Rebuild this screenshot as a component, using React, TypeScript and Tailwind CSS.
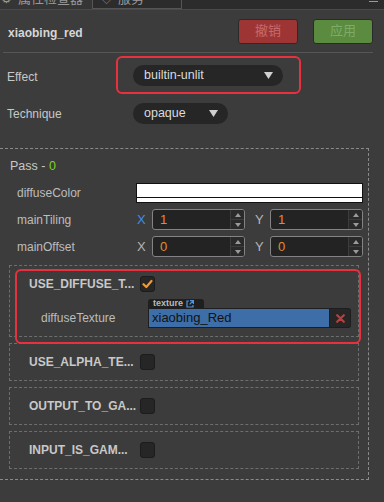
import { useState } from "react";

const Caret = () => (
	<svg width="9" height="7" viewBox="0 0 9 7">
		<path d="M0 0h9L4.5 7z" fill="#d0d0d0" />
	</svg>
);

const Spinner = () => (
	<div className="flex h-full w-[14px] flex-col border-l border-[#3c3c3c] bg-[#2a2a2a]">
		<div className="flex flex-1 items-center justify-center border-b border-[#3c3c3c]">
			<svg width="6" height="4" viewBox="0 0 6 4">
				<path d="M0 4h6L3 0z" fill="#9a9a9a" />
			</svg>
		</div>
		<div className="flex flex-1 items-center justify-center">
			<svg width="6" height="4" viewBox="0 0 6 4">
				<path d="M0 0h6L3 4z" fill="#9a9a9a" />
			</svg>
		</div>
	</div>
);

const NumField = ({ value }: { value: string }) => (
	<div className="flex h-[21px] w-[93px] items-center overflow-hidden rounded-[3px] border border-[#838383] bg-[#232323]">
		<span className="flex-1 pl-[7px] text-[13px] text-[#e38b2c]">{value}</span>
		<Spinner />
	</div>
);

const Checkbox = ({ checked }: { checked: boolean }) => (
	<div className="flex h-[16px] w-[15px] items-center justify-center rounded-[3px] border border-[#1c1c1c] bg-[#262626]">
		{checked && (
			<svg width="11" height="10" viewBox="0 0 11 10">
				<path d="M1.5 5.2l2.8 2.8L9.5 2" fill="none" stroke="#f29a2e" strokeWidth="2.2" strokeLinecap="round" strokeLinejoin="round" />
			</svg>
		)}
	</div>
);

const DefineBox = ({ name }: { name: string }) => (
	<div className="flex h-[38px] w-[350px] items-center border border-dashed border-[#6e6e6e] pl-[19px]">
		<span className="w-[111px] text-[12px] font-bold text-[#c8c8c8]">{name}</span>
		<Checkbox checked={false} />
	</div>
);

const VecRow = ({ label, x, y, blueX }: { label: string; x: string; y: string; blueX?: boolean }) => (
	<div className="flex h-[21px] items-center">
		<span className="w-[137px] pl-[17px] text-[12px] text-[#bdbdbd]">{label}</span>
		<span className={`w-[15px] text-[13px] ${blueX ? "text-[#3d8ee8]" : "text-[#b5b5b5]"}`}>X</span>
		<NumField value={x} />
		<span className="ml-[10px] w-[15px] text-[13px] text-[#b5b5b5]">Y</span>
		<NumField value={y} />
	</div>
);

export default function App() {
	const [useDiffuse] = useState(true);

	return (
		<div className="h-[502px] w-[384px] overflow-hidden bg-[#3c3c3c] font-['Liberation_Sans','Noto_Sans_CJK_SC',sans-serif]">
			{/* tab strip, scrolled off the top */}
			<div className="flex h-[10px] items-end overflow-hidden border-b border-[#4a4a4a] bg-[#2c2c2c]">
				<div className="flex h-[20px] w-[92px] shrink-0 items-center gap-[6px] bg-[#353535] pl-[1px] text-[13px] text-[#9a9a9a]">
					<span className="text-[12px]">⚙</span>
					<span>属性检查器</span>
				</div>
				<div className="flex h-[20px] w-[90px] shrink-0 items-center gap-[6px] border border-[#555] pl-[8px] text-[13px] text-[#9a9a9a]">
					<span className="text-[11px]">◇</span>
					<span>服务</span>
				</div>
				<div className="ml-auto mr-[6px] mb-[7px] h-[1px] w-[9px] bg-[#9a9a9a]" />
			</div>

			{/* header */}
			<div className="flex h-[42px] items-center justify-between pl-[8px] pr-[11px]">
				<span className="pt-[3px] text-[12px] font-bold text-[#d6d6d6]">xiaobing_red</span>
				<div className="flex gap-[15px]">
					<button className="h-[25px] w-[60px] rounded-[3px] border border-[#2a2a2a] bg-[#9e3535] text-[13px] text-[#c66a6a]">
						撤销
					</button>
					<button className="h-[25px] w-[60px] rounded-[3px] border border-[#2a2a2a] bg-[#5a8b3e] text-[13px] text-[#7eab68]">
						应用
					</button>
				</div>
			</div>
			<div className="ml-[3px] h-[1px] w-[370px] bg-[#565656]" />

			{/* Effect */}
			<div className="mt-[3px] flex items-center">
				<span className="w-[116px] pl-[7px] pt-[3px] text-[12px] text-[#c8c8c8]">Effect</span>
				<div className="flex h-[38px] w-[185px] items-center rounded-[6px] border-2 border-[#e8303f] pl-[15px]">
					<div className="flex h-[21px] w-[150px] items-center justify-between rounded-full bg-[#262626] pl-[11px] pr-[10px]">
						<span className="text-[12.5px] text-[#dcdcdc]">builtin-unlit</span>
						<Caret />
					</div>
				</div>
			</div>

			{/* Technique */}
			<div className="mt-[9px] flex items-center">
				<span className="w-[133px] pl-[7px] text-[12px] text-[#c8c8c8]">Technique</span>
				<div className="flex h-[21px] w-[95px] items-center justify-between rounded-full bg-[#262626] pl-[11px] pr-[10px]">
					<span className="text-[12.5px] text-[#dcdcdc]">opaque</span>
					<Caret />
				</div>
			</div>

			{/* Pass */}
			<div className="mt-[24px] w-[369px] border border-l-0 border-dashed border-[#8a8a8a] pb-[10px] pt-[7px]">
				<div className="flex h-[20px] items-center pl-[10px] text-[12.5px] text-[#c8c8c8]">
					Pass -&nbsp;<span className="text-[#7ed321]">0</span>
				</div>

				<div className="mt-[7px] flex h-[20px] items-center">
					<span className="w-[136px] pl-[17px] text-[12px] text-[#bdbdbd]">diffuseColor</span>
					<div className="flex h-[20px] w-[227px] flex-col border border-[#111] bg-white">
						<div className="flex-1" />
						<div className="h-[1px] bg-[#111]" />
						<div className="h-[4px]" />
					</div>
				</div>

				<div className="mt-[6px] flex flex-col gap-[6px]">
					<VecRow label="mainTiling" x="1" y="1" blueX />
					<VecRow label="mainOffset" x="0" y="0" />
				</div>

				<div className="ml-[9px] mt-[8px] flex flex-col gap-[6px]">
					{/* USE_DIFFUSE_TEXTURE */}
					<div className="relative w-[350px] border border-dashed border-[#6e6e6e] pb-[8px] pl-[19px] pt-[9px]">
						<div className="flex h-[18px] items-center">
							<span className="w-[111px] text-[12px] font-bold text-[#c8c8c8]">USE_DIFFUSE_T...</span>
							<Checkbox checked={useDiffuse} />
						</div>
						<div className="mt-[6px] flex items-end">
							<span className="flex h-[20px] w-[119px] items-center pl-[12px] text-[12px] text-[#bdbdbd]">
								diffuseTexture
							</span>
							<div className="flex flex-col">
								<div className="flex h-[9px] w-[56px] items-center gap-[3px] rounded-t-[3px] bg-[#1f1f1f] pl-[5px] text-[9px] font-bold leading-none text-[#bbbbbb]">
									texture
									<svg width="8" height="8" viewBox="0 0 8 8">
										<path d="M3 1H1v6h6V5" fill="none" stroke="#4f94e0" strokeWidth="1.2" />
										<path d="M4 0.6h3.4V4M7.4 0.6L3.6 4.4" fill="none" stroke="#4f94e0" strokeWidth="1.2" />
									</svg>
								</div>
								<div className="flex h-[20px]">
									<div className="flex w-[182px] items-center border border-[#1e1e1e] bg-[#3d6ea8] pl-[3px] text-[13px] text-[#121212]">
										xiaobing_Red
									</div>
									<div className="flex w-[21px] items-center justify-center rounded-r-[3px] border border-l-0 border-[#1e1e1e] bg-[#262626]">
										<svg width="9" height="9" viewBox="0 0 9 9">
											<path d="M1.2 1.2l6.6 6.6M7.8 1.2L1.2 7.8" stroke="#c43b3b" strokeWidth="2.2" strokeLinecap="round" />
										</svg>
									</div>
								</div>
							</div>
						</div>
						{/* highlight */}
						<div className="absolute left-[5px] top-[3px] z-10 h-[75px] w-[346px] rounded-[6px] border-2 border-[#e8303f]" />
					</div>

					<DefineBox name="USE_ALPHA_TE..." />
					<DefineBox name="OUTPUT_TO_GA..." />
					<DefineBox name="INPUT_IS_GAM..." />
				</div>
			</div>
		</div>
	);
}
